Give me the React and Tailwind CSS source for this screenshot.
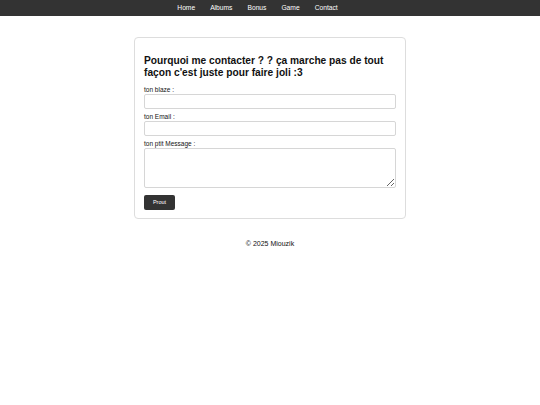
export default function App() {
  const links = ['Home', 'Albums', 'Bonus', 'Game', 'Contact']

  return (
    <div className="min-h-[405px] bg-white text-[#111] font-['Liberation_Sans',Arial,sans-serif]">
      <nav className="h-4 bg-[#333] flex items-center justify-center gap-[15px] pr-[25px]">
        {links.map((label) => (
          <a key={label} href="#" className="text-white text-[6.7px] leading-none">
            {label}
          </a>
        ))}
      </nav>

      <main className="flex justify-center pt-[21px]">
        <form className="w-[272px] border border-[#ddd] rounded-[4px] px-[9px] pt-[17px] pb-2 bg-white leading-none">
          <h2 className="text-[10.2px] font-bold leading-[12px] mb-[7px]">
            Pourquoi me contacter ? ? ça marche pas de tout façon c'est juste pour faire joli :3
          </h2>

          <label className="block text-[6.5px] leading-[7px] mb-[1px]">ton blaze :</label>
          <input type="text" className="block w-full h-[15px] border border-[#d6d6d6] rounded-[2px] mb-[4px]" />

          <label className="block text-[6.5px] leading-[7px] mb-[1px]">ton Email :</label>
          <input type="email" className="block w-full h-[15px] border border-[#d6d6d6] rounded-[2px] mb-[4px]" />

          <label className="block text-[6.5px] leading-[7px] mb-[1px]">ton ptit Message :</label>
          <textarea className="block w-full h-[40px] border border-[#d6d6d6] rounded-[2px] mb-[7px]" />

          <button type="button" className="block w-[31px] h-[15px] bg-[#333] text-white text-[5.5px] rounded-[2px]">
            Prout
          </button>
        </form>
      </main>

      <footer className="text-center text-[7px] mt-[20px]">© 2025 Miouzik</footer>
    </div>
  )
}
